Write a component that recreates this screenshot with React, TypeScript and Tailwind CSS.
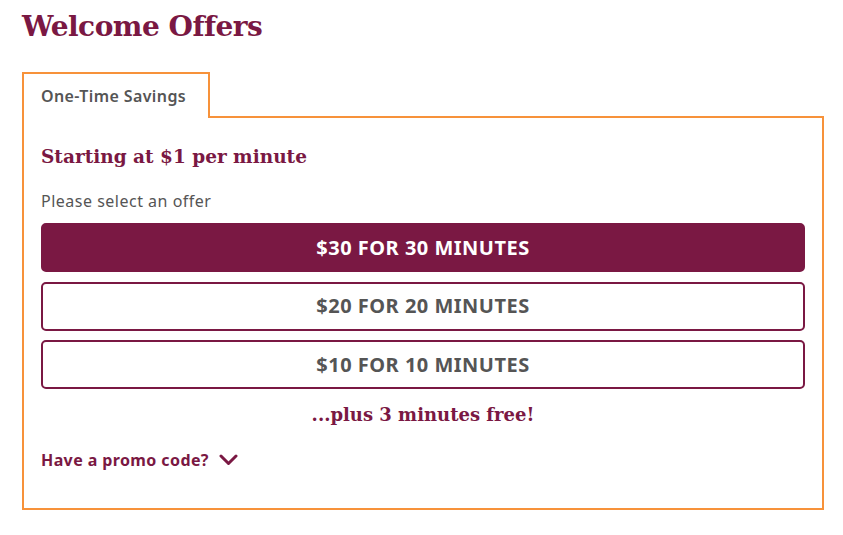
import React from 'react';

const offers = [
  { label: '$30 for 30 minutes', selected: true },
  { label: '$20 for 20 minutes', selected: false },
  { label: '$10 for 10 minutes', selected: false },
];

const slab = "font-['DejaVu_Serif',serif]";
const sans = "font-['Noto_Sans',sans-serif]";

export default function App() {
  return (
    <div className={`min-h-[535px] w-[843px] bg-white pl-[22px] pr-[20px] pt-[10px] ${sans}`}>
      <h1 className={`${slab} text-[28px] font-bold leading-[34px] tracking-[-0.5px] text-[#7a1843]`}>Welcome Offers</h1>

      <div className="mt-[28px] flex">
        <div className="relative z-10 -mb-[2px] flex h-[46px] w-[188px] items-center border-2 border-b-0 border-[#f7923a] bg-white pl-[17px]">
          <span className="text-[16px] font-semibold tracking-[0.4px] text-[#555]">One-Time Savings</span>
        </div>
      </div>

      <div className="w-[802px] border-2 border-[#f7923a] px-[17px] pb-[37px] pt-[25px]">
        <h2 className={`${slab} text-[18.5px] font-bold leading-[28px] text-[#7a1843]`}>Starting at $1 per minute</h2>
        <p className="mt-[19px] text-[16px] leading-[22px] tracking-[0.5px] text-[#555]">Please select an offer</p>

        <div className="mt-[11px] flex flex-col gap-[9.5px]">
          {offers.map((o) => (
            <button
              key={o.label}
              className={`flex h-[49px] w-full items-center justify-center rounded-[5px] border-2 border-[#7a1843] text-[20px] font-bold uppercase tracking-[0.5px] ${
                o.selected ? 'bg-[#7a1843] text-white' : 'bg-white text-[#555]'
              }`}
            >
              {o.label}
            </button>
          ))}
        </div>

        <p className={`${slab} mt-[13px] text-center text-[18px] font-bold leading-[26px] text-[#7a1843]`}>...plus 3 minutes free!</p>

        <button className="mt-[21px] flex items-center gap-[10px] text-[16px] font-bold leading-[22px] tracking-[0.4px] text-[#7a1843]">
          Have a promo code?
          <svg width="19" height="12" viewBox="0 0 19 12" fill="none" stroke="currentColor" strokeWidth="3" strokeLinecap="round" strokeLinejoin="round">
            <polyline points="2,2 9.5,9.5 17,2" />
          </svg>
        </button>
      </div>
    </div>
  );
}
